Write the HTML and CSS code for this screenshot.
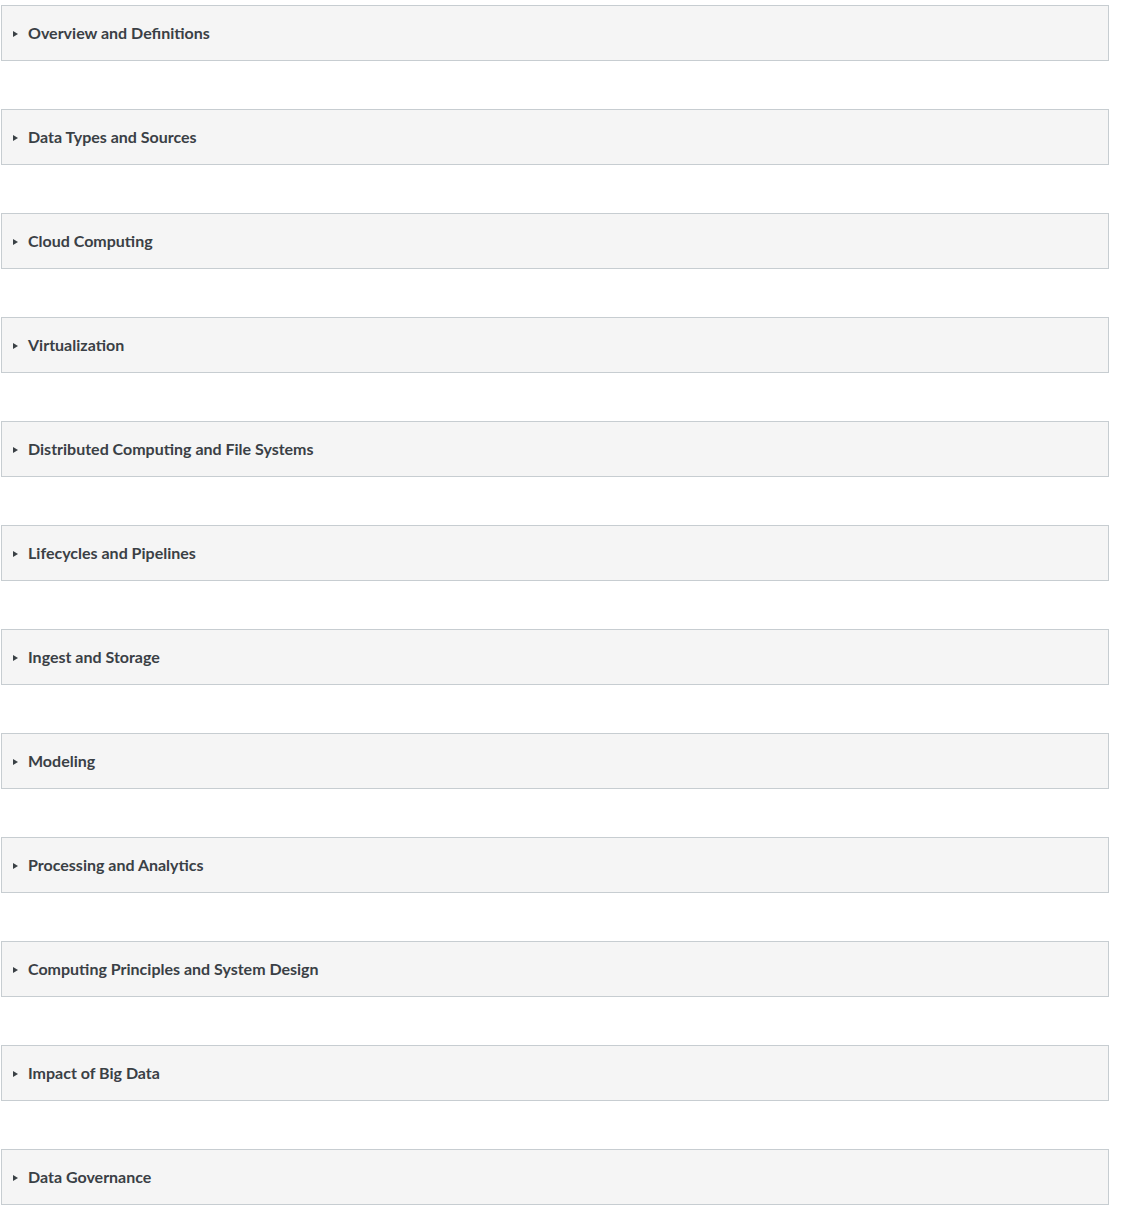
FILE: index.html
```html
<!DOCTYPE html>
<html lang="en">
<head>
<meta charset="utf-8">
<title>Topics</title>
<link rel="stylesheet" href="styles.css">
</head>
<body>
<div class="list">
  <details class="topic"><summary>Overview and Definitions</summary></details>
  <details class="topic"><summary>Data Types and Sources</summary></details>
  <details class="topic"><summary>Cloud Computing</summary></details>
  <details class="topic"><summary>Virtualization</summary></details>
  <details class="topic"><summary>Distributed Computing and File Systems</summary></details>
  <details class="topic"><summary>Lifecycles and Pipelines</summary></details>
  <details class="topic"><summary>Ingest and Storage</summary></details>
  <details class="topic"><summary>Modeling</summary></details>
  <details class="topic"><summary>Processing and Analytics</summary></details>
  <details class="topic"><summary>Computing Principles and System Design</summary></details>
  <details class="topic"><summary>Impact of Big Data</summary></details>
  <details class="topic"><summary>Data Governance</summary></details>
</div>
</body>
</html>
```

FILE: styles.css
```css
html, body {
  margin: 0;
  padding: 0;
  background: #ffffff;
}
body {
  font-family: Lato, "Liberation Sans", sans-serif;
  color: #3a4045;
}
.list {
  display: flex;
  flex-direction: column;
  gap: 48px;
  padding: 5px 0 0 1px;
  width: 1108px;
}
.topic {
  background: #f5f5f5;
  border: 1px solid #c7cdd1;
}
.topic summary {
  display: flex;
  align-items: center;
  gap: 10px;
  padding: 17px 11px;
  font-size: 16px;
  line-height: 20px;
  font-weight: 700;
  cursor: pointer;
  list-style: none;
}
.topic summary::-webkit-details-marker {
  display: none;
}
.topic summary::before {
  content: "";
  flex: none;
  width: 0;
  height: 0;
  margin-top: 1px;
  border-top: 3px solid transparent;
  border-bottom: 3px solid transparent;
  border-left: 5px solid #3a4045;
}
```
